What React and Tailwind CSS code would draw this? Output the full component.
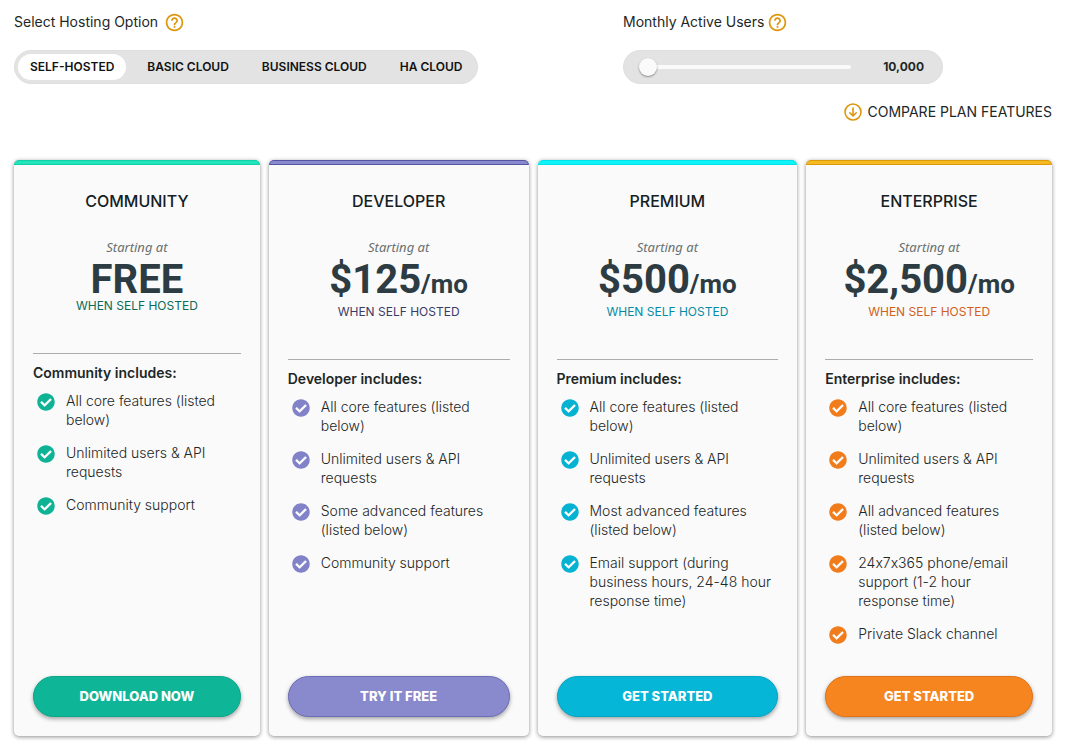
import { useState } from 'react';
import { FaCheckCircle } from 'react-icons/fa';
import { MdHelpOutline } from 'react-icons/md';

const hostingOptions = ['SELF-HOSTED', 'BASIC CLOUD', 'BUSINESS CLOUD', 'HA CLOUD'];

const plans = [
  {
    name: 'Community',
    price: 'FREE',
    action: 'DOWNLOAD NOW',
    bar: 'bg-[#23e3bb] border-[#0fd0a6]',
    note: 'text-[#0c6b58]',
    icon: 'text-[#0eb295]',
    button: 'bg-[#0eb697] border-[#0aa688]',
    features: ['All core features (listed below)', 'Unlimited users & API requests', 'Community support'],
  },
  {
    name: 'Developer',
    price: '$125',
    perMonth: true,
    action: 'TRY IT FREE',
    bar: 'bg-[#8989cd] border-[#5555a5]',
    note: 'text-[#3b3b68]',
    icon: 'text-[#8282c8]',
    button: 'bg-[#8989cd] border-[#6c6cb6]',
    features: [
      'All core features (listed below)',
      'Unlimited users & API requests',
      'Some advanced features (listed below)',
      'Community support',
    ],
  },
  {
    name: 'Premium',
    price: '$500',
    perMonth: true,
    action: 'GET STARTED',
    bar: 'bg-[#0ef3f7] border-[#00e3ea]',
    note: 'text-[#078ba4]',
    icon: 'text-[#06b2d2]',
    button: 'bg-[#05b6d7] border-[#04a4c2]',
    features: [
      'All core features (listed below)',
      'Unlimited users & API requests',
      'Most advanced features (listed below)',
      'Email support (during business hours, 24-48 hour response time)',
    ],
  },
  {
    name: 'Enterprise',
    price: '$2,500',
    perMonth: true,
    action: 'GET STARTED',
    bar: 'bg-[#f5b921] border-[#dc9a08]',
    note: 'text-[#d2601a]',
    icon: 'text-[#f07c1c]',
    button: 'bg-[#f6851f] border-[#e07316]',
    features: [
      'All core features (listed below)',
      'Unlimited users & API requests',
      'All advanced features (listed below)',
      '24x7x365 phone/email support (1-2 hour response time)',
      'Private Slack channel',
    ],
  },
];

const ArrowDownCircle = () => (
  <svg className="h-[18px] w-[18px] text-[#dd970f]" viewBox="0 0 18 18" fill="none" stroke="currentColor" strokeWidth="1.6">
    <circle cx="9" cy="9" r="8" />
    <path strokeLinecap="round" strokeLinejoin="round" d="M9 5v8M5.8 9.8L9 13l3.2-3.2" />
  </svg>
);

const HelpButton = ({ label }) => (
  <button type="button" aria-label={label} className="text-[#dd970f]">
    <MdHelpOutline className="h-[21px] w-[21px]" />
  </button>
);

const PlanCard = ({ plan }) => (
  <section className="flex flex-col rounded-[5px] bg-[#fafafa] shadow-[0_1px_4px_rgba(0,0,0,0.45)]">
    <div className={`h-[5px] rounded-t-[5px] border ${plan.bar}`} />
    <div className="flex flex-1 flex-col px-[19px] pt-6 pb-[19px]">
      <div className="text-center">
        <h2 className="text-base leading-6 font-medium text-[#15201f] uppercase">{plan.name}</h2>
        <p className="mt-[25px] font-['Noto_Sans'] text-[13px] leading-[18px] text-[#68706f] italic">Starting at</p>
        <p className={`pt-[6px] font-['Roboto'] text-[40px] leading-9 font-bold text-[#2c3c42] ${plan.perMonth ? 'pb-[6px]' : ''}`}>
          {plan.price}
          {plan.perMonth && <span className="text-[26px] leading-none">/mo</span>}
        </p>
        <p className={`text-xs leading-4 ${plan.note}`}>WHEN SELF HOSTED</p>
      </div>
      <hr className="mt-[39px] border-[#a9adac]" />
      <h3 className="mt-[9px] text-sm leading-5 font-semibold text-[#1d2726]">{plan.name} includes:</h3>
      <ul className="mt-2 mb-6 space-y-[14px]">
        {plan.features.map((feature) => (
          <li key={feature} className="flex gap-[11px] pl-1 text-sm leading-[19px] font-light text-[#1d2726]">
            <FaCheckCircle className={`mt-[2px] h-[18px] w-[18px] shrink-0 ${plan.icon}`} />
            <span className="[font-feature-settings:'calt'_0]">{feature}</span>
          </li>
        ))}
      </ul>
      <button
        type="button"
        className={`mt-auto h-[41px] rounded-full border text-[13px] font-extrabold text-white shadow-[0_2px_4px_rgba(0,0,0,0.35)] ${plan.button}`}
      >
        {plan.action}
      </button>
    </div>
  </section>
);

const App = () => {
  const [hosting, setHosting] = useState('SELF-HOSTED');
  const [users, setUsers] = useState(10000);

  return (
    <main className="bg-white pt-3 pr-[18px] pb-[18px] pl-[14px] font-['Inter',sans-serif] text-[#1d2726]">
      <div className="grid grid-cols-[609fr_429fr]">
        <div>
          <div className="flex h-5 items-center gap-[6px] text-sm">
            <span id="hosting-label">Select Hosting Option</span>
            <HelpButton label="About hosting options" />
          </div>
          <div
            role="group"
            aria-labelledby="hosting-label"
            className="mt-[18px] inline-flex gap-[9px] rounded-full border border-[#dfdfdf] bg-[#e3e3e3] p-[3px]"
          >
            {hostingOptions.map((option) => (
              <button
                key={option}
                type="button"
                aria-pressed={hosting === option}
                onClick={() => setHosting(option)}
                className={`h-[26px] rounded-full px-3 text-xs font-semibold whitespace-nowrap text-[#111] ${hosting === option ? 'bg-white' : ''}`}
              >
                {option}
              </button>
            ))}
          </div>
        </div>

        <div>
          <div className="flex h-5 items-center gap-[3px] text-sm">
            <label htmlFor="active-users">Monthly Active Users</label>
            <HelpButton label="About monthly active users" />
          </div>
          <div className="mt-[18px] flex h-[34px] w-80 items-center justify-between rounded-full border border-[#dfdfdf] bg-[#e3e3e3] pr-[18px] pl-[15px]">
            <input
              id="active-users"
              type="range"
              min="10000"
              max="1000000"
              step="10000"
              value={users}
              onChange={(e) => setUsers(Number(e.target.value))}
              className="h-[18px] w-[212px] appearance-none bg-transparent [&::-webkit-slider-runnable-track]:h-1 [&::-webkit-slider-runnable-track]:rounded-full [&::-webkit-slider-runnable-track]:bg-[#fafafa] [&::-webkit-slider-thumb]:-mt-[7px] [&::-webkit-slider-thumb]:h-[18px] [&::-webkit-slider-thumb]:w-[18px] [&::-webkit-slider-thumb]:appearance-none [&::-webkit-slider-thumb]:rounded-full [&::-webkit-slider-thumb]:bg-[#fafafa] [&::-webkit-slider-thumb]:shadow-[0_1px_2px_rgba(0,0,0,0.4)]"
            />
            <output htmlFor="active-users" className="text-xs font-bold">
              {users.toLocaleString('en-US')}
            </output>
          </div>
        </div>
      </div>

      <div className="mt-[18px] flex justify-end">
        <a href="#features" className="flex h-5 items-center gap-[5px] text-sm">
          <ArrowDownCircle />
          COMPARE PLAN FEATURES
        </a>
      </div>

      <div className="mt-[38px] grid min-h-[576px] grid-cols-[246fr_260fr_260fr_246fr] gap-[9px]">
        {plans.map((plan) => (
          <PlanCard key={plan.name} plan={plan} />
        ))}
      </div>
    </main>
  );
};

export default App;
